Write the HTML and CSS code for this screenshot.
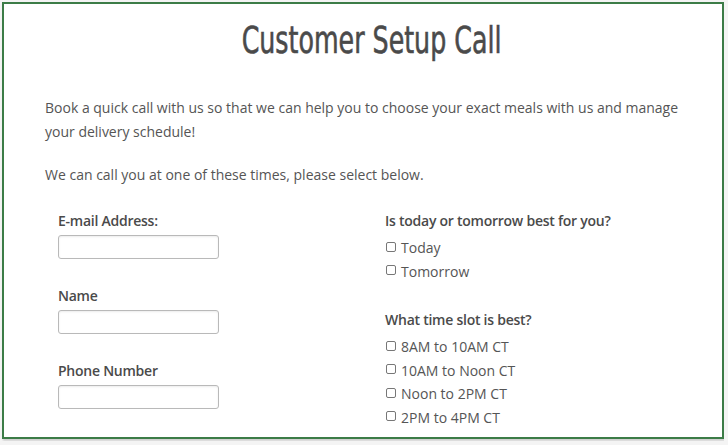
FILE: index.html
```html
<!DOCTYPE html>
<html>
<head>
<meta charset="utf-8">
<link rel="stylesheet" href="styles.css">
</head>
<body>
<div class="frame">
  <div class="title-row"><h1 class="title">Customer Setup Call</h1></div>
  <p class="intro">Book a quick call with us so that we can help you to choose your exact meals with us and manage your delivery schedule!</p>
  <p class="intro second">We can call you at one of these times, please select below.</p>
  <div class="cols">
    <div class="col left">
      <div class="field">
        <label class="lbl">E-mail Address:</label>
        <input class="txt" type="text">
      </div>
      <div class="field">
        <label class="lbl">Name</label>
        <input class="txt" type="text">
      </div>
      <div class="field">
        <label class="lbl">Phone Number</label>
        <input class="txt" type="text">
      </div>
    </div>
    <div class="col right">
      <div class="group">
        <div class="lbl">Is today or tomorrow best for you?</div>
        <label class="opt"><input class="cb" type="checkbox">Today</label>
        <label class="opt"><input class="cb" type="checkbox">Tomorrow</label>
      </div>
      <div class="group second-group">
        <div class="lbl">What time slot is best?</div>
        <label class="opt"><input class="cb" type="checkbox">8AM to 10AM CT</label>
        <label class="opt"><input class="cb" type="checkbox">10AM to Noon CT</label>
        <label class="opt"><input class="cb" type="checkbox">Noon to 2PM CT</label>
        <label class="opt"><input class="cb" type="checkbox">2PM to 4PM CT</label>
      </div>
    </div>
  </div>
</div>
</body>
</html>
```
FILE: styles.css
```css
html, body {
  margin: 0;
  padding: 0;
  background: #f4f4f4;
}
body {
  padding: 2px;
  width: 724px;
  height: 441px;
  box-sizing: border-box;
}
.frame {
  box-sizing: border-box;
  width: 722px;
  height: 437px;
  background: #fff;
  border: 2px solid #3c7c47;
  box-shadow: 1px 2px 2px rgba(0,0,0,0.15);
  font-family: "Open Sans", sans-serif;
  color: #555;
  padding: 0 0 0 41px;
  overflow: hidden;
}
.title-row {
  margin: 12px 0 0 -23px;
  display: flex;
  justify-content: center;
}
.title {
  margin: 0;
  font-family: "DejaVu Sans Condensed", "DejaVu Sans", sans-serif;
  font-weight: normal;
  font-size: 38px;
  line-height: 48px;
  color: #4a4a4a;
  -webkit-text-stroke: 0.6px #4a4a4a;
  transform: scaleX(0.74);
  white-space: nowrap;
}
.intro {
  margin: 32px 0 0 0;
  font-size: 14px;
  line-height: 24px;
  width: 640px;
}
.intro.second {
  margin-top: 19px;
}
.cols {
  display: flex;
  margin-top: 24px;
}
.col.left {
  width: 340px;
  padding-left: 13px;
  box-sizing: border-box;
}
.field {
  margin-bottom: 27px;
}
.lbl {
  display: block;
  font-size: 14px;
  font-weight: 600;
  letter-spacing: -0.25px;
  line-height: 20px;
  color: #4a4a4a;
  margin-bottom: 4px;
}
.txt {
  display: block;
  box-sizing: border-box;
  width: 161px;
  height: 24px;
  margin: 0;
  border: 1px solid #b9b9b9;
  border-radius: 3px;
  box-shadow: inset 0 1px 2px rgba(0,0,0,0.08);
  background: #fff;
}
.group .lbl {
  margin-bottom: 5px;
}
.opt {
  display: flex;
  align-items: center;
  font-size: 14px;
  line-height: 23.5px;
  color: #555;
}
.cb {
  appearance: none;
  -webkit-appearance: none;
  width: 10px;
  height: 10px;
  margin: 0 5px 2px 1px;
  border: 1px solid #777;
  border-radius: 2px;
  background: #fff;
  box-sizing: border-box;
}
.second-group {
  margin-top: 27px;
}
```
